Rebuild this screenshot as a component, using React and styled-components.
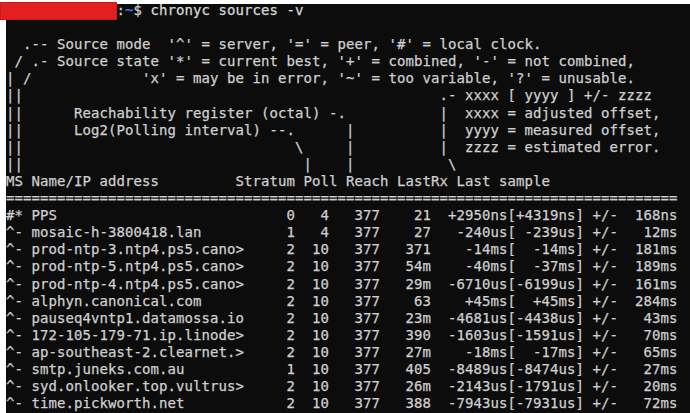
import React from "react";
import styled, { createGlobalStyle } from "styled-components";

const Global = createGlobalStyle`
  html, body { margin: 0; padding: 0; background: #ffffff; height: 100%; overflow: hidden; }
  #root { height: 100%; }
`;

const Page = styled.div`
  position: relative;
  height: 100%;
  padding-left: 6px;
  box-sizing: border-box;
  background: #ffffff;
`;

const Terminal = styled.pre`
  margin: 0;
  height: 100%;
  box-sizing: border-box;
  padding-top: 2px;
  background: linear-gradient(#ffffff 0 4px, #0c0c0c 4px);
  color: #cfcfcf;
  font-family: "DejaVu Sans Mono", "Liberation Mono", monospace;
  font-size: 14px;
  letter-spacing: 0.07px;
  line-height: 17.1px;
  -webkit-text-stroke: 0.25px currentColor;
  white-space: pre;
  overflow: hidden;
`;

const Line = styled.div`
  height: 17.1px;
`;

const Tilde = styled.span`
  color: #3b78ff;
`;

const Command = styled.span`
  color: #d8d8d8;
`;

const Redaction = styled.div`
  position: absolute;
  left: 0;
  top: 2px;
  width: 117px;
  height: 18px;
  background: #e41f1f;
  box-shadow: inset 0 0 0 1px #c81a1a;
`;

const legend = [
  "",
  "  .-- Source mode  '^' = server, '=' = peer, '#' = local clock.",
  " / .- Source state '*' = current best, '+' = combined, '-' = not combined,",
  "| /             'x' = may be in error, '~' = too variable, '?' = unusable.",
  "||                                                 .- xxxx [ yyyy ] +/- zzzz",
  "||      Reachability register (octal) -.           |  xxxx = adjusted offset,",
  "||      Log2(Polling interval) --.      |          |  yyyy = measured offset,",
  "||                                \\     |          |  zzzz = estimated error.",
  "||                                 |    |           \\",
  "MS Name/IP address         Stratum Poll Reach LastRx Last sample",
  "=".repeat(79),
];

const sources = [
  ["#", "*", "PPS", 0, 4, "377", "21", "+2950ns", "+4319ns", "168ns"],
  ["^", "-", "mosaic-h-3800418.lan", 1, 4, "377", "27", "-240us", "-239us", "12ms"],
  ["^", "-", "prod-ntp-3.ntp4.ps5.cano>", 2, 10, "377", "371", "-14ms", "-14ms", "181ms"],
  ["^", "-", "prod-ntp-5.ntp4.ps5.cano>", 2, 10, "377", "54m", "-40ms", "-37ms", "189ms"],
  ["^", "-", "prod-ntp-4.ntp4.ps5.cano>", 2, 10, "377", "29m", "-6710us", "-6199us", "161ms"],
  ["^", "-", "alphyn.canonical.com", 2, 10, "377", "63", "+45ms", "+45ms", "284ms"],
  ["^", "-", "pauseq4vntp1.datamossa.io", 2, 10, "377", "23m", "-4681us", "-4438us", "43ms"],
  ["^", "-", "172-105-179-71.ip.linode>", 2, 10, "377", "390", "-1603us", "-1591us", "70ms"],
  ["^", "-", "ap-southeast-2.clearnet.>", 2, 10, "377", "27m", "-18ms", "-17ms", "65ms"],
  ["^", "-", "smtp.juneks.com.au", 1, 10, "377", "405", "-8489us", "-8474us", "27ms"],
  ["^", "-", "syd.onlooker.top.vultrus>", 2, 10, "377", "26m", "-2143us", "-1791us", "20ms"],
  ["^", "-", "time.pickworth.net", 2, 10, "377", "388", "-7943us", "-7931us", "72ms"],
];

const fmt = ([m, s, name, st, poll, reach, rx, off, meas, err]) =>
  `${m}${s} ${name.padEnd(27)}  ${String(st).padStart(2)}  ${String(poll).padStart(2)}   ${reach}  ${rx.padStart(4)}  ${off.padStart(7)}[${meas.padStart(7)}] +/- ${err.padStart(6)}`;

export default function App() {
  return (
    <>
      <Global />
      <Page>
        <Terminal>
          <Line>
            {"             :"}
            <Tilde>~</Tilde>
            {"$ "}
            <Command>chronyc sources -v</Command>
          </Line>
          {legend.map((l, i) => (
            <Line key={"l" + i}>{l}</Line>
          ))}
          {sources.map((r, i) => (
            <Line key={"s" + i}>{fmt(r)}</Line>
          ))}
        </Terminal>
        <Redaction />
      </Page>
    </>
  );
}
